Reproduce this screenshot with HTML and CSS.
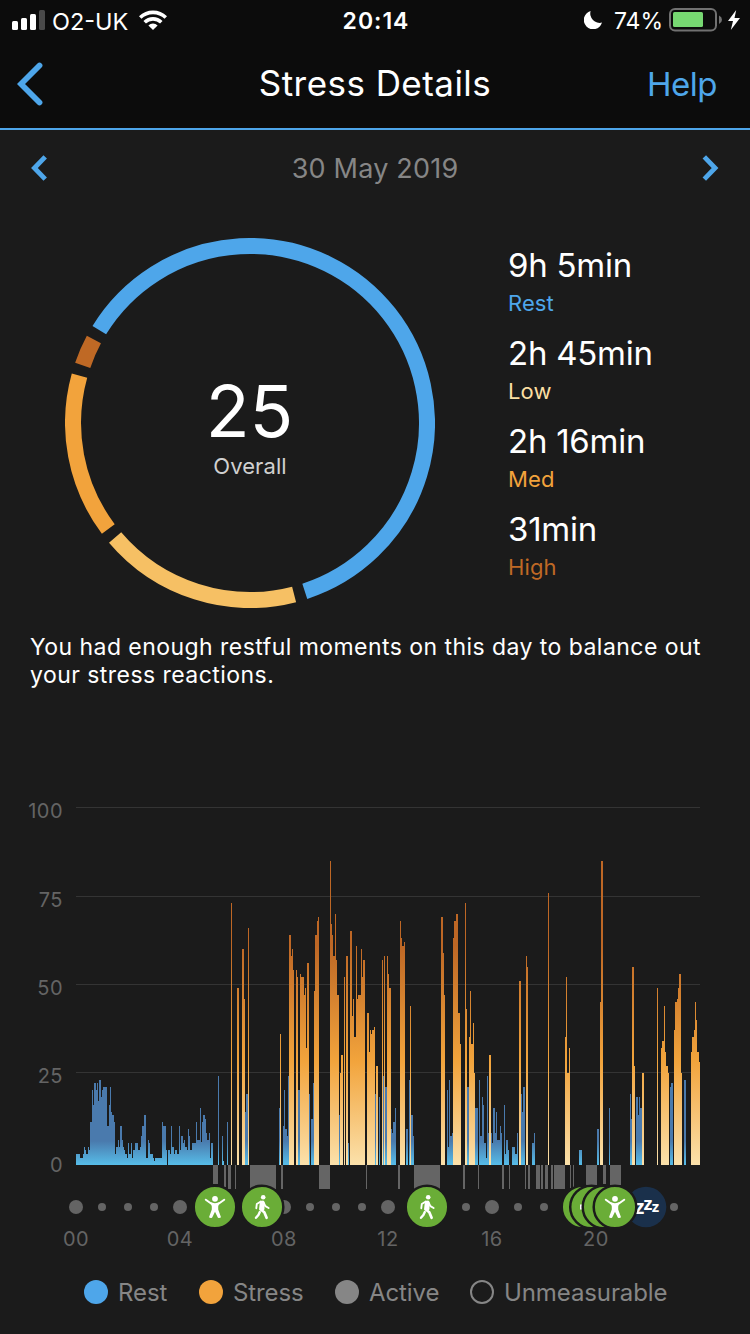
FILE: index.html
```html
<!DOCTYPE html>
<html lang="en">
<head>
<meta charset="utf-8">
<title>Stress Details</title>
<link rel="stylesheet" href="styles.css">
</head>
<body>
<header class="header">
  <div class="status">
    <div class="status-left">
      <svg class="signal" width="33" height="20" viewBox="0 0 33 20"><g fill="#fff"><rect x="0" y="11" width="6" height="9" rx="1.5"/><rect x="9" y="8" width="6" height="12" rx="1.5"/><rect x="18" y="4" width="6" height="16" rx="1.5"/></g><rect x="27" y="0" width="6" height="20" rx="1.5" fill="#4a4a4a"/></svg>
      <span class="carrier">O2-UK</span>
      <svg class="wifi" width="28" height="20" viewBox="0 0 28 20"><g fill="none" stroke="#fff" stroke-width="3.6"><path d="M1.2 7.5A18.5 18.5 0 0 1 26.8 7.5"/><path d="M5.7 12.2A12 12 0 0 1 22.3 12.2"/></g><path d="M14 20L9.4 15.4A6.6 6.6 0 0 1 18.6 15.4Z" fill="#fff"/></svg>
    </div>
    <span class="clock">20:14</span>
    <div class="status-right">
      <svg class="moon" width="18" height="18" viewBox="0 0 18 18"><path d="M6.6 0A9.3 9.3 0 1 0 18 11.6A9.4 9.4 0 0 1 6.6 0Z" fill="#fff"/></svg>
      <span class="percent">74%</span>
      <svg class="battery" width="54" height="24" viewBox="0 0 54 24"><rect x="1" y="1" width="46" height="21.5" rx="5" fill="none" stroke="#717171" stroke-width="2"/><rect x="4" y="4" width="30" height="15" rx="1.5" fill="#77d872"/><path d="M50 7.5Q53 9 53 11.7T50 16Z" fill="#717171"/></svg>
      <svg class="bolt" width="12" height="20" viewBox="0 0 12 20"><path d="M8.2 0L0 11H5L2.8 20L12 8H6.5Z" fill="#fff"/></svg>
    </div>
  </div>
  <nav class="nav">
    <svg class="back" width="26" height="44" viewBox="0 0 26 44"><path d="M22.5 3.5L4 22L22.5 40.5" fill="none" stroke="#4ea6ea" stroke-width="5.8" stroke-linecap="round"/></svg>
    <h1 class="title">Stress Details</h1>
    <span class="help">Help</span>
  </nav>
</header>

<div class="date-row">
  <svg width="17" height="26" viewBox="0 0 17 26"><path d="M14.2 1.800L3.400 13L14.2 24.200" fill="none" stroke="#4ea6ea" stroke-width="4.800"/></svg>
  <span class="date">30 May 2019</span>
  <svg width="17" height="26" viewBox="0 0 17 26"><path d="M2.300 1.800L13.100 13L2.300 24.200" fill="none" stroke="#4ea6ea" stroke-width="4.800"/></svg>
</div>

<section class="summary">
  <div class="donut">
    <svg class="ring" width="370" height="370" viewBox="65 238 370 370"><g fill="none" stroke-width="16">
      <path stroke="#4ea6ea" d="M99.3 330.1A177 177 0 1 1 304.8 591.3"/>
      <path stroke="#f6c064" d="M294.1 594.4A177 177 0 0 1 115.1 537.5"/>
      <path stroke="#f2a33c" d="M108.3 529A177 177 0 0 1 79.5 375.6"/>
      <path stroke="#bf6925" d="M82.7 365.3A177 177 0 0 1 93.9 339.6"/></g></svg>
    <div class="score"><span class="score-value">25</span><span class="score-label">Overall</span></div>
  </div>
  <dl class="stats">
    <div class="stat"><dt class="stat-value">9h 5min</dt><dd class="stat-label rest">Rest</dd></div>
    <div class="stat"><dt class="stat-value">2h 45min</dt><dd class="stat-label low">Low</dd></div>
    <div class="stat"><dt class="stat-value">2h 16min</dt><dd class="stat-label med">Med</dd></div>
    <div class="stat"><dt class="stat-value">31min</dt><dd class="stat-label high">High</dd></div>
  </dl>
</section>

<p class="message">You had enough restful moments on this day to balance out<br>your stress reactions.</p>

<svg class="chart" width="750" height="480" viewBox="0 780 750 480">
  <defs>
    <linearGradient id="stress" gradientUnits="userSpaceOnUse" x1="0" y1="1165" x2="0" y2="945">
      <stop offset="0" stop-color="#fbe1ab"/><stop offset=".47" stop-color="#f2a43c"/><stop offset="1" stop-color="#be6725"/>
    </linearGradient>
    <linearGradient id="rest" gradientUnits="userSpaceOnUse" x1="0" y1="1165" x2="0" y2="1141">
      <stop offset="0" stop-color="#57bde9"/><stop offset="1" stop-color="#4a7aad"/>
    </linearGradient>
    <g id="stretch" fill="#fff" stroke="#fff" stroke-linecap="round">
      <circle cx="0" cy="-8.2" r="2.9" stroke="none"/>
      <path fill="none" stroke-width="2" d="M-9.2 -7.3L-3.6 -3.2M9.2 -7.3L3.6 -3.2"/>
      <path stroke="none" d="M-4.6 -4.9Q0 -2.8 4.6 -4.9L3.2 -.5V2.4L6 10.2Q4.3 11.7 2.8 10.5L0 4.8L-2.8 10.5Q-4.3 11.7 -6 10.2L-3.2 2.4V-.5Z"/>
    </g>
    <g id="walk" fill="none" stroke="#fff" stroke-linecap="round" stroke-linejoin="round">
      <circle cx="1.2" cy="-9.8" r="2.3" fill="#fff" stroke="none"/>
      <path d="M-.8 -4.8L-1.6 2.2L2.3 5.3L4.6 10.8" stroke-width="2.7"/>
      <path d="M-2.2 5L-3.6 8L-6 10.8" stroke-width="2.4"/>
      <path d="M.8 -4.8L.8 1.800" stroke-width="3.4"/>
      <path d="M-1.2 -5.5L-5.2 -3L-5.7 1.2M1.8 -4L3.4 -.8L6.6 1" stroke-width="1.9"/>
    </g>
  </defs>
  <path class="grid" d="M76 807.5H700M76 896.5H700M76 984.5H700M76 1072.5H700"/>
  <g class="axis-y" text-anchor="end"><text x="63" y="818">100</text><text x="63" y="907">75</text><text x="63" y="995">50</text><text x="63" y="1083">25</text><text x="63" y="1172">0</text></g>

  <path fill="url(#rest)" shape-rendering="crispEdges" d="M76 1165V1154H80V1158H83V1154H84V1147H85V1150H86V1154H88V1147H89V1150H90V1122H92V1090H93V1105H94V1083H96V1090H97V1083H98V1101H99V1080H101V1097H102V1090H103V1087H107V1126H109V1105H110V1087H111V1112H112V1115H114V1122H115V1154H116V1147H118V1140H119V1147H120V1126H122V1140H123V1147H124V1150H125V1154H127V1158H128V1143H129V1154H131V1143H132V1158H133V1150H135V1143H138V1150H140V1147H141V1136H142V1126H144V1115H146V1158H148V1140H149V1143H150V1154H153V1158H154V1161H155V1158H162V1122H163V1126H166V1150H167V1165H168V1150H170V1154H171V1126H172V1147H174V1154H175V1150H177V1154H179V1126H180V1150H181V1136H183V1143H184V1140H185V1147H187V1150H188V1129H189V1136H190V1150H192V1143H196V1122H197V1140H200V1108H201V1142H202V1122H203V1115H205V1119H206V1133H207V1140H209V1133H210V1158H211V1143H213V1165H218V1076H219V1165H222V1136H223V1161H224V1165H227V1122H228V1165H245V1112H246V1094H248V1165H279V1108H280V1165H283V1126H284V1090H285V1129H287V1136H288V1076H289V1165H298V1090H300V1165H309V1094H310V1165H311V1119H313V1083H314V1165H339V1115H340V1165H348V1143H349V1165H375V1094H376V1165H379V1097H380V1165H383V1076H384V1165H385V1087H387V1165H391V1129H392V1133H393V1122H395V1108H396V1165H406V1129H408V1165H409V1080H410V1165H411V1115H413V1136H414V1165H447V1090H448V1147H449V1080H450V1136H452V1133H453V1165H467V1087H469V1165H475V1108H478V1165H479V1080H480V1136H482V1097H483V1105H484V1143H486V1158H487V1076H488V1133H489V1165H491V1133H492V1143H493V1108H495V1133H496V1112H497V1140H500V1126H501V1133H502V1165H504V1105H505V1154H506V1140H508V1150H509V1165H512V1147H515V1154H517V1133H518V1165H521V1094H522V1112H523V1087H525V1165H532V1143H534V1133H535V1165H579V1150H582V1165H597V1129H599V1165H609V1108H610V1165H630V1094H631V1119H632V1165H636V1097H638V1115H639V1097H640V1108H642V1165H670V1087H671V1083H673V1165H684V1080H686V1165Z"/>
  <path fill="url(#stress)" shape-rendering="crispEdges" d="M231 1165V903H232V1165H237V988H239V1165H242V949H244V999H245V1165H248V928H249V1165H280V1034H281V1165H289V935H291V956H292V949H293V970H294V1165H296V970H297V977H298V1165H300V974H301V977H304V995H305V988H306V1048H307V963H309V1165H314V991H315V935H317V921H318V917H319V1165H330V861H331V924H332V935H333V956H335V914H336V960H337V995H339V1165H340V1073H341V1055H343V1165H344V977H345V1165H346V956H348V1165H350V931H352V1016H353V999H354V1037H356V946H357V999H358V995H361V949H362V977H363V960H365V1165H367V1013H369V1052H370V1030H371V1034H372V1030H374V1027H375V1165H376V1066H378V1165H382V960H383V1165H384V956H385V1165H387V956H388V974H389V988H391V1165H400V921H401V938H402V946H404V942H405V1165H410V1006H411V1165H441V917H443V953H444V995H445V1165H453V938H454V921H456V914H458V1013H460V1044H461V1165H465V903H466V1009H467V1165H469V1037H470V991H471V1044H473V1023H474V1073H475V1165H489V1055H491V1165H519V981H521V1165H526V956H527V967H528V1165H548V893H549V1165H565V1037H566V977H567V1073H569V1048H570V1165H600V1002H601V861H603V1165H632V967H634V1066H635V1165H642V1073H644V1165H657V988H658V1165H661V1048H662V1041H664V1006H665V1052H666V1066H668V1073H669V1165H674V1030H675V1002H677V999H678V988H679V974H681V1073H682V1165H691V1052H692V1037H694V1030H695V1002H696V1020H697V1052H699V1062H700V1165Z"/>
  <path class="active-bars" d="M213 1165h5v19h-5zM224 1165h2v22h-2zM228 1165h3v24h-3zM235 1165h1v24h-1zM250 1165h26v24h-26zM281 1165h2v24h-2zM319 1165h11v24h-11zM366 1165h1v24h-1zM398 1165h2v24h-2zM414 1165h26v24h-26zM463 1165h2v24h-2zM478 1165h1v24h-1zM502 1165h2v24h-2zM509 1165h1v24h-1zM525 1165h1v24h-1zM528 1165h2v24h-2zM536 1165h4v24h-4zM541 1165h2v24h-2zM545 1165h3v24h-3zM551 1165h2v24h-2zM554 1165h11v24h-11zM570 1165h1v23h-1zM573 1165h1v22h-1zM586 1165h11v20h-11zM603 1165h3v19h-3zM610 1165h11v20h-11z"/>

  <g class="dots">
    <circle cx="76" cy="1207" r="7"/><circle cx="102" cy="1207" r="4"/><circle cx="128" cy="1207" r="4"/><circle cx="154" cy="1207" r="4"/><circle cx="180" cy="1207" r="7"/><circle cx="284" cy="1207" r="7"/><circle cx="310" cy="1207" r="4"/><circle cx="336" cy="1207" r="4"/><circle cx="362" cy="1207" r="4"/><circle cx="388" cy="1207" r="7"/><circle cx="466" cy="1207" r="4"/><circle cx="492" cy="1207" r="7"/><circle cx="518" cy="1207" r="4"/><circle cx="544" cy="1207" r="4"/><circle cx="674" cy="1207" r="4"/>
  </g>
  <circle cx="646" cy="1207" r="20.3" fill="#1a304b"/>
  <g class="zzz"><text x="634.500" y="1214" font-size="20">z</text><text x="643.500" y="1209.500" font-size="18">z</text><text x="651.800" y="1211.500" font-size="15">z</text></g>
  <g class="badges">
    <circle cx="215" cy="1207" r="21.300"/><circle cx="262" cy="1207" r="21.300"/><circle cx="427" cy="1207" r="21.300"/>
    <circle cx="583" cy="1207" r="21.300"/><circle cx="591.500" cy="1207" r="21.300"/><rect class="sliver" x="580" y="1204.500" width="3" height="5"/><circle cx="604" cy="1207" r="21.300"/><circle cx="615" cy="1207" r="21.300"/>
  </g>
  <use href="#stretch" x="215" y="1207"/><use href="#walk" x="262" y="1207"/><use href="#walk" x="427" y="1207"/><use href="#stretch" x="615" y="1207"/>
  <g class="axis-x" text-anchor="middle"><text x="76" y="1246">00</text><text x="180" y="1246">04</text><text x="284" y="1246">08</text><text x="388" y="1246">12</text><text x="492" y="1246">16</text><text x="596" y="1246">20</text></g>
</svg>

<ul class="legend">
  <li class="key key-rest"><i class="swatch"></i><span>Rest</span></li>
  <li class="key key-stress"><i class="swatch"></i><span>Stress</span></li>
  <li class="key key-active"><i class="swatch"></i><span>Active</span></li>
  <li class="key key-none"><i class="swatch"></i><span>Unmeasurable</span></li>
</ul>
</body>
</html>
```
FILE: styles.css
```css
* { box-sizing: border-box; margin: 0; padding: 0; }
svg { display: block; flex: none; }
body { width: 750px; height: 1334px; overflow: hidden; background: #1b1b1b; color: #fff; font-family: Inter, "Liberation Sans", sans-serif; display: flex; flex-direction: column; }
span, dt, dd, h1, p { white-space: nowrap; }

.header { height: 130px; flex: none; background: #0c0c0c; border-bottom: 2px solid #4ea6ea; }
.status { height: 40px; display: grid; grid-template-columns: 1fr auto 1fr; align-items: center; padding: 0 10px 0 12px; font-size: 23px; }
.status-left, .status-right { display: flex; align-items: center; }
.status-right { justify-content: flex-end; }
.carrier { margin: 2px 11px 0 7px; font-size: 23.5px; }
.clock { padding-top: 2px; font-weight: 600; letter-spacing: 1px; }
.percent { margin: 2px 6px 0 12px; }
.bolt { margin-left: 5px; }
.nav { height: 88px; display: grid; grid-template-columns: 1fr auto 1fr; align-items: center; }
.back { margin-left: 17px; }
.title { padding-bottom: 3px; font-size: 35px; font-weight: 400; letter-spacing: .45px; }
.help { justify-self: end; margin-right: 33px; font-size: 33px; letter-spacing: -.5px; color: #4ea6ea; }

.date-row { height: 76px; flex: none; display: flex; align-items: center; justify-content: space-between; padding: 0 31px; }
.date { font-size: 27px; letter-spacing: .2px; color: #868686; }

.summary { height: 402px; flex: none; display: flex; padding: 32px 0 0 65px; }
.donut { display: grid; width: 370px; height: 370px; }
.ring, .score { grid-area: 1 / 1; }
.score { display: flex; flex-direction: column; align-items: center; padding-top: 133px; }
.score-value { font-size: 72px; line-height: 80px; margin-right: 1px; }
.score-label { margin-top: 1px; font-size: 22px; line-height: 28px; letter-spacing: .1px; color: #d0d0d0; }
.stats { margin-left: 73px; padding-top: 5px; }
.stat { height: 88px; }
.stat-value { font-size: 33px; line-height: 44px; letter-spacing: -.25px; }
.stat-label { font-size: 22px; line-height: 32px; letter-spacing: .1px; }
.rest { color: #4ea6ea; }
.low { color: #fbdfa2; }
.med { color: #f2a33c; }
.high { color: #bf6925; }

.message { height: 147px; flex: none; padding: 25px 0 0 30px; font-size: 23px; line-height: 28px; letter-spacing: .45px; }

.chart { margin-top: 25px; }
.grid { stroke: #343434; }
.axis-y, .axis-x { fill: #646464; font-size: 20px; letter-spacing: .5px; }
.active-bars { fill: #656565; }
.dots { fill: #646464; }
.badges { fill: #6aad37; stroke: #1b1b1b; stroke-width: 2.5px; }
.sliver { fill: #fff; stroke: none; }
.zzz { fill: #fff; font-family: "Noto Sans", sans-serif; font-weight: 700; }

.legend { height: 64px; display: flex; align-items: center; list-style: none; padding-left: 84px; font-size: 24px; color: #868686; letter-spacing: -.1px; }
.key { display: flex; align-items: center; gap: 10px; }
.key-rest { width: 115px; }
.key-stress { width: 136px; }
.key-active { width: 135px; }
.swatch { width: 24px; height: 24px; border-radius: 50%; background: #868686; }
.key-rest .swatch { background: #4ea6ea; }
.key-stress .swatch { background: #f2a33c; }
.key-none .swatch { background: none; border: 2px solid #868686; }
```
